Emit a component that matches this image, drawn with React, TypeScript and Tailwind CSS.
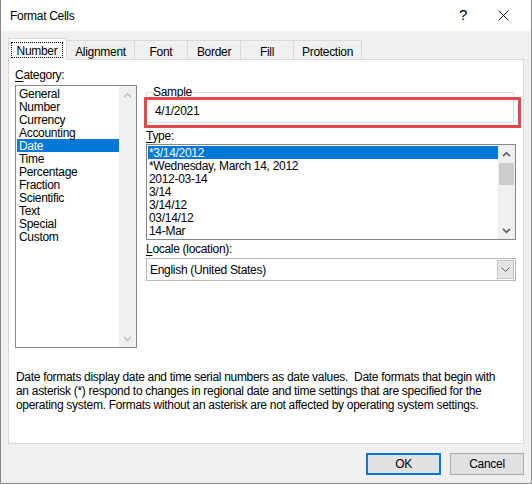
import React from 'react'

const categories = [
  'General',
  'Number',
  'Currency',
  'Accounting',
  'Date',
  'Time',
  'Percentage',
  'Fraction',
  'Scientific',
  'Text',
  'Special',
  'Custom',
]

const dateTypes = [
  '*3/14/2012',
  '*Wednesday, March 14, 2012',
  '2012-03-14',
  '3/14',
  '3/14/12',
  '03/14/12',
  '14-Mar',
]

const tabs = [
  { label: 'Alignment', width: 'w-[68px]' },
  { label: 'Font', width: 'w-[53px]' },
  { label: 'Border', width: 'w-[53px]' },
  { label: 'Fill', width: 'w-[53px]' },
  { label: 'Protection', width: 'w-[68px]' },
]

type ChevronProps = {
  readonly up?: boolean
  readonly color: string
}

const Chevron = ({ up, color }: ChevronProps): JSX.Element => (
  <svg width="9" height="6" viewBox="0 0 9 6">
    <path
      d={up ? 'M1 5.2 L4.5 1.6 L8 5.2' : 'M1 0.8 L4.5 4.4 L8 0.8'}
      stroke={color}
      strokeWidth="1.7"
      fill="none"
    />
  </svg>
)

const Label = ({ hotkey, rest }: { readonly hotkey: string; readonly rest: string }): JSX.Element => (
  <div className="h-[15px] leading-[15px]">
    <span className="underline underline-offset-[2px]">{hotkey}</span>
    {rest}
  </div>
)

export default function App(): JSX.Element {
  return (
    <div className="flex h-[484px] w-[532px] flex-col border-x border-b border-[#8a8a8a] bg-[#f0f0f0] font-['Segoe_UI','Liberation_Sans',Arial,sans-serif] text-[12px] tracking-[-0.3px] text-black">
      {/* title bar */}
      <div className="flex h-[31px] shrink-0 items-center bg-white pl-[9px]">
        <span className="flex-1">Format Cells</span>
        <span className="w-[10px] text-[15px]">?</span>
        <div className="flex w-[62px] justify-center pl-[6px]">
          <svg width="11" height="11" viewBox="0 0 11 11">
            <path d="M0.5 0.5 L10.5 10.5 M10.5 0.5 L0.5 10.5" stroke="#111" strokeWidth="1" />
          </svg>
        </div>
      </div>

      <div className="flex flex-1 flex-col px-[7px] pt-[7px] pb-[8px]">
        {/* tabs */}
        <div className="flex h-[22px] items-end">
          <div className="relative z-10 h-[22px] w-[59px] border-x border-t border-[#d9d9d9] bg-white pl-[2px] pt-[3px]">
            <div className="flex h-[16px] w-[52px] items-center justify-center border border-dotted border-black pt-[1px] leading-none">
              Number
            </div>
          </div>
          {tabs.map(({ label, width }) => (
            <div
              key={label}
              className={`flex h-[20px] items-center justify-center border-t border-r border-[#d9d9d9] bg-[#f0f0f0] pt-[2px] ${width}`}
            >
              {label}
            </div>
          ))}
        </div>

        {/* panel */}
        <div className="-mt-px flex h-[385px] flex-col border border-[#d9d9d9] bg-white px-[6px] pt-[8px]">
          <div className="flex gap-[9px]">
            {/* category column */}
            <div className="flex w-[122px] flex-col">
              <Label hotkey="C" rest="ategory:" />
              <div className="mt-[2px] flex h-[263px] border border-[#828790]">
                <div className="flex-1 pt-[1px] pl-[1px]">
                  {categories.map((c) => (
                    <div
                      key={c}
                      className={`h-[13px] pl-[2px] leading-[14px] ${c === 'Date' ? 'bg-[#0078d7] text-white' : ''}`}
                    >
                      {c}
                    </div>
                  ))}
                </div>
                <div className="flex w-[17px] flex-col justify-between bg-[#f0f0f0]">
                  <div className="flex h-[17px] items-center justify-center">
                    <Chevron up color="#c3c3c3" />
                  </div>
                  <div className="flex h-[17px] items-center justify-center">
                    <Chevron color="#c3c3c3" />
                  </div>
                </div>
              </div>
            </div>

            {/* format details column */}
            <div className="flex w-[370px] flex-col">
              <div className="relative mt-[24px] mr-[2px] h-[31px] border border-[#dcdcdc]">
                <div className="-mt-[8px] ml-[5px] w-fit bg-white px-[1px] leading-[15px]">Sample</div>
                <div className="mt-[4px] pl-[8px] leading-[15px]">4/1/2021</div>
                <div className="absolute top-[4px] -left-[3px] h-[31px] w-[377px] border-[3px] border-[#e24a4a]" />
              </div>

              <div className="mt-[6px]">
                <Label hotkey="T" rest="ype:" />
              </div>
              <div className="flex h-[96px] border border-[#828790]">
                <div className="flex-1 pt-[1px] pl-[1px]">
                  {dateTypes.map((t, i) => (
                    <div
                      key={t}
                      className={`h-[13px] pl-[1px] leading-[14px] ${i === 0 ? 'bg-[#0078d7] text-white' : ''}`}
                    >
                      {t}
                    </div>
                  ))}
                </div>
                <div className="flex w-[17px] flex-col bg-[#f0f0f0]">
                  <div className="flex h-[17px] items-center justify-center">
                    <Chevron up color="#606060" />
                  </div>
                  <div className="mx-[1px] mt-[1px] h-[22px] bg-[#cdcdcd]" />
                  <div className="flex-1" />
                  <div className="flex h-[17px] items-center justify-center">
                    <Chevron color="#606060" />
                  </div>
                </div>
              </div>

              <div className="mt-[2px]">
                <Label hotkey="L" rest="ocale (location):" />
              </div>
              <div className="mt-[1px] flex h-[23px] items-center border border-[#b9b9b9] bg-white">
                <span className="flex-1 pl-[3px]">English (United States)</span>
                <div className="mr-[1px] flex h-[19px] w-[17px] items-center justify-center border border-[#c4c4c4] bg-[#e5e5e5]">
                  <svg width="9" height="5" viewBox="0 0 9 5">
                    <path d="M0.5 0.5 L4.5 4.5 L8.5 0.5" stroke="#606060" strokeWidth="1" fill="none" />
                  </svg>
                </div>
              </div>
            </div>
          </div>

          <p className="mt-[22px] pl-[1px] leading-[14px] whitespace-nowrap">
            Date formats display date and time serial numbers as date values.&nbsp; Date formats that begin with
            <br />
            an asterisk (*) respond to changes in regional date and time settings that are specified for the
            <br />
            operating system. Formats without an asterisk are not affected by operating system settings.
          </p>
        </div>

        {/* buttons */}
        <div className="mt-[9px] flex justify-end gap-[9px]">
          <button className="h-[22px] w-[75px] border-2 border-[#0078d7] bg-[#e1e1e1]">OK</button>
          <button className="h-[22px] w-[74px] border border-[#adadad] bg-[#e1e1e1]">Cancel</button>
        </div>
      </div>
    </div>
  )
}
